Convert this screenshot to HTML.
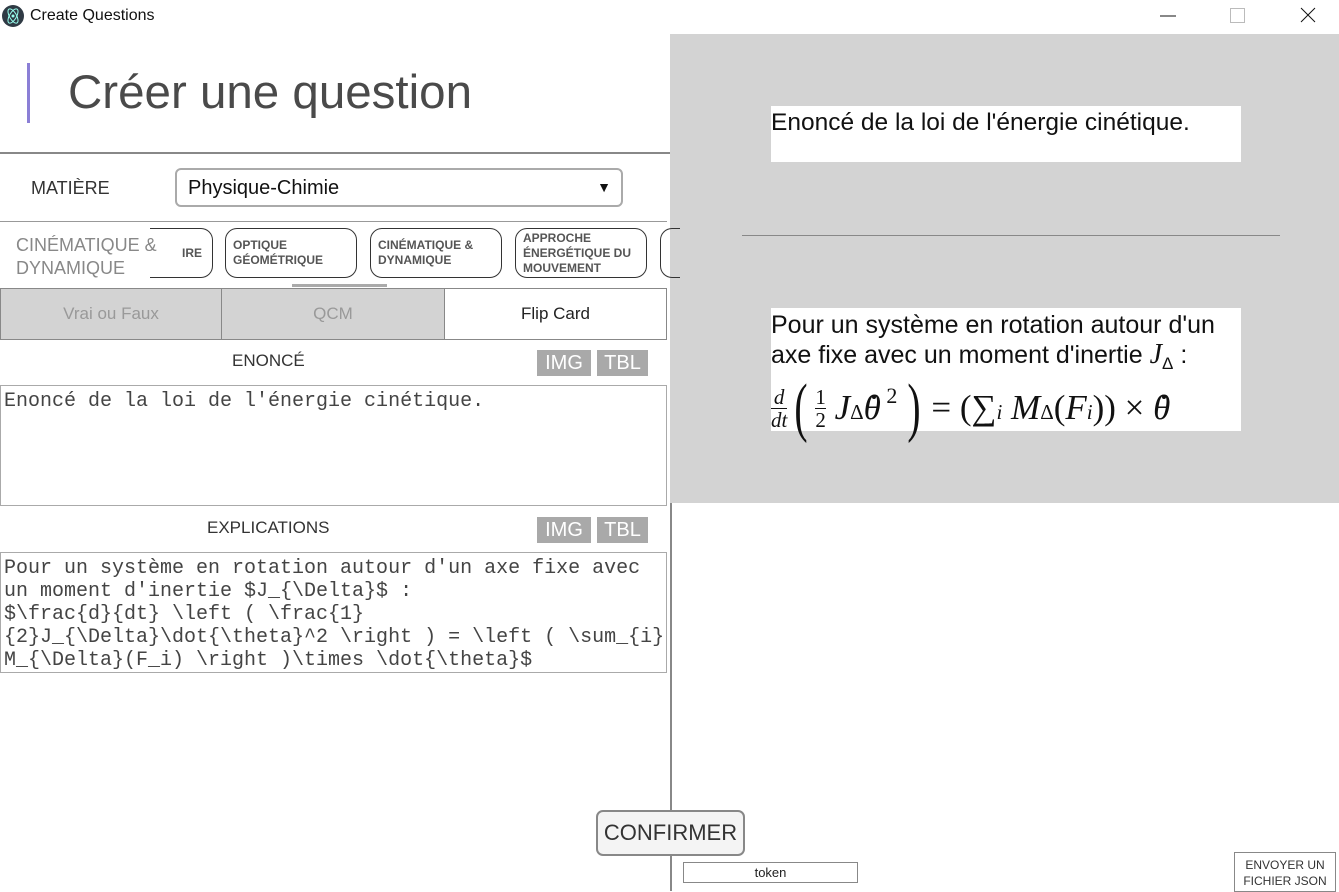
<!DOCTYPE html>
<html><head><meta charset="utf-8"><style>
*{box-sizing:border-box;margin:0;padding:0}
body{width:1339px;height:891px;position:relative;background:#fff;font-family:"Liberation Sans",sans-serif;overflow:hidden;color:#222}
.a{position:absolute}
.chip{position:absolute;top:228px;height:50px;border:1.5px solid #333;border-radius:12px;font-size:12px;font-weight:bold;color:#555;padding:0 0 0 7px;display:flex;flex-direction:column;justify-content:center;line-height:15px}
.tab{position:absolute;top:288px;height:52px;border:1.5px solid #888;font-size:17px;display:flex;align-items:center;justify-content:center}
.btn{position:absolute;background:#a9a9a9;color:#fff;font-size:20px;height:26px;display:flex;align-items:center;justify-content:center}
.ta{position:absolute;left:0;width:667px;border:1px solid #aaa;font-family:"Liberation Mono",monospace;font-size:20px;line-height:23px;padding:5px 3px;white-space:pre;color:#444;overflow:hidden}
.m{font-family:"Liberation Serif",serif;font-style:italic}
.td{position:relative;display:inline-block}
.td:after{content:"";position:absolute;left:50%;top:2px;width:4px;height:4px;border-radius:2px;background:#111}
.fr{display:inline-flex;flex-direction:column;align-items:center;font-size:21px;line-height:22px}
</style></head><body>
<svg class="a" style="left:2px;top:5px" width="22" height="22" viewBox="0 0 22 22"><circle cx="11" cy="11" r="11" fill="#2f3a44"/><ellipse cx="11" cy="11" rx="8" ry="3.5" fill="none" stroke="#9fe" stroke-width="1" transform="rotate(60 11 11)"/><ellipse cx="11" cy="11" rx="8" ry="3.5" fill="none" stroke="#9fe" stroke-width="1" transform="rotate(-60 11 11)"/><circle cx="11" cy="11" r="1.5" fill="#9fe"/></svg>
<div class="a" style="left:30px;top:7px;font-size:16px;color:#111">Create Questions</div>
<svg class="a" style="left:1150px;top:0" width="189" height="34"><line x1="10" y1="16" x2="26" y2="16" stroke="#111"/><rect x="80.5" y="8.5" width="14" height="14" fill="none" stroke="#bbb"/><path d="M151 8 L165 22 M165 8 L151 22" stroke="#111"/></svg>
<div class="a" style="left:670px;top:34px;width:669px;height:469px;background:#d3d3d3"></div>
<div class="a" style="left:771px;top:106px;width:470px;height:56px;background:#fff;font-size:24.5px;padding-top:3px;color:#111">Enoncé de la loi de l'énergie cinétique.</div>
<div class="a" style="left:742px;top:235px;width:538px;height:1px;background:#888"></div>
<div class="a" style="left:771px;top:308px;width:470px;height:123px;background:#fff;font-size:25px;line-height:30px;color:#111;padding-top:2px;white-space:nowrap">Pour un système en rotation autour d'un<br>axe fixe avec un moment d'inertie <span class="m" style="font-size:28px">J</span><sub style="font-size:17px">Δ</sub> :
<div style="font-family:'Liberation Serif',serif;font-size:35px;display:flex;align-items:center;height:62px;white-space:nowrap;margin-top:-2px">
<span class="fr" style="font-style:italic"><span>d</span><span style="border-top:1px solid #111">dt</span></span>
<span style="font-size:66px;margin:0 3px;transform:scaleX(.6)">(</span>
<span class="fr"><span>1</span><span style="border-top:1px solid #111">2</span></span>
<span class="m">&nbsp;J</span><sub style="font-size:21px;align-self:flex-end;margin-bottom:12px">Δ</sub><span class="m td">θ</span><sup style="font-size:22px;align-self:flex-start;margin-top:4px">&nbsp;2</sup>
<span style="font-size:66px;margin:0 6px;transform:scaleX(.6)">)</span>=&nbsp;(∑<sub class="m" style="font-size:21px;align-self:flex-end;margin-bottom:12px">i</sub><span class="m">&nbsp;M</span><sub style="font-size:21px;align-self:flex-end;margin-bottom:12px">Δ</sub>(<span class="m">F</span><sub class="m" style="font-size:21px;align-self:flex-end;margin-bottom:12px">i</sub>))&nbsp;×&nbsp;<span class="m td">θ</span></div></div>
<div class="a" style="left:670px;top:503px;width:2px;height:388px;background:#888"></div>
<div class="a" style="left:27px;top:63px;width:3px;height:60px;background:#8b7fd6"></div>
<div class="a" style="left:68px;top:65px;font-size:47.5px;color:#4a4a4a;font-family:'Liberation Sans',sans-serif">Créer une question</div>
<div class="a" style="left:0;top:152px;width:670px;height:2px;background:#888"></div>
<div class="a" style="left:31px;top:178px;font-size:18px;color:#333">MATIÈRE</div>
<div class="a" style="left:175px;top:168px;width:448px;height:39px;border:2px solid #aaa;border-radius:6px;font-size:20px;padding:7px 0 0 11px;color:#111">Physique-Chimie<span style="position:absolute;right:10px;top:9px;font-size:14px">▼</span></div>
<div class="a" style="left:0;top:221px;width:667px;height:1px;background:#999"></div>
<div class="a" style="left:16px;top:234px;font-size:18px;color:#888;line-height:23px">CINÉMATIQUE &amp;<br>DYNAMIQUE</div>
<div class="chip" style="left:150px;width:63px;border-left:none;border-radius:0 12px 12px 0;padding-left:32px;overflow:hidden">IRE</div>
<div class="chip" style="left:225px;width:132px">OPTIQUE<br>GÉOMÉTRIQUE</div>
<div class="chip" style="left:370px;width:132px">CINÉMATIQUE &amp;<br>DYNAMIQUE</div>
<div class="chip" style="left:515px;width:132px">APPROCHE<br>ÉNERGÉTIQUE DU<br>MOUVEMENT</div>
<div class="chip" style="left:660px;width:20px;border-right:none;border-radius:12px 0 0 12px"></div>
<div class="a" style="left:292px;top:284px;width:95px;height:3px;background:#aaa"></div>
<div class="tab" style="left:0;width:222px;background:#d3d3d3;color:#999">Vrai ou Faux</div>
<div class="tab" style="left:221px;width:224px;background:#d3d3d3;color:#999">QCM</div>
<div class="tab" style="left:444px;width:223px;background:#fff;color:#222">Flip Card</div>
<div class="a" style="left:232px;top:351px;font-size:17px;color:#333">ENONCÉ</div>
<div class="btn" style="left:537px;top:350px;width:54px">IMG</div>
<div class="btn" style="left:597px;top:350px;width:51px">TBL</div>
<div class="ta" style="top:385px;height:121px;padding-top:4px">Enoncé de la loi de l'énergie cinétique.</div>
<div class="a" style="left:207px;top:518px;font-size:17px;color:#333">EXPLICATIONS</div>
<div class="btn" style="left:537px;top:517px;width:54px">IMG</div>
<div class="btn" style="left:597px;top:517px;width:51px">TBL</div>
<div class="ta" style="top:552px;height:121px;padding-top:4px">Pour un système en rotation autour d'un axe fixe avec
un moment d'inertie $J_{\Delta}$ :
$\frac{d}{dt} \left ( \frac{1}
{2}J_{\Delta}\dot{\theta}^2 \right ) = \left ( \sum_{i}
M_{\Delta}(F_i) \right )\times \dot{\theta}$</div>
<div class="a" style="left:596px;top:810px;width:149px;height:46px;background:#f4f4f4;border:2px solid #888;border-radius:7px;font-size:22px;color:#333;display:flex;align-items:center;justify-content:center">CONFIRMER</div>
<div class="a" style="left:683px;top:862px;width:175px;height:21px;border:1px solid #888;font-size:13px;text-align:center;line-height:19px">token</div>
<div class="a" style="left:1234px;top:852px;width:102px;height:40px;border:1px solid #888;font-size:12px;text-align:center;line-height:16px;padding-top:4px;color:#333">ENVOYER UN<br>FICHIER JSON</div>
</body></html>
